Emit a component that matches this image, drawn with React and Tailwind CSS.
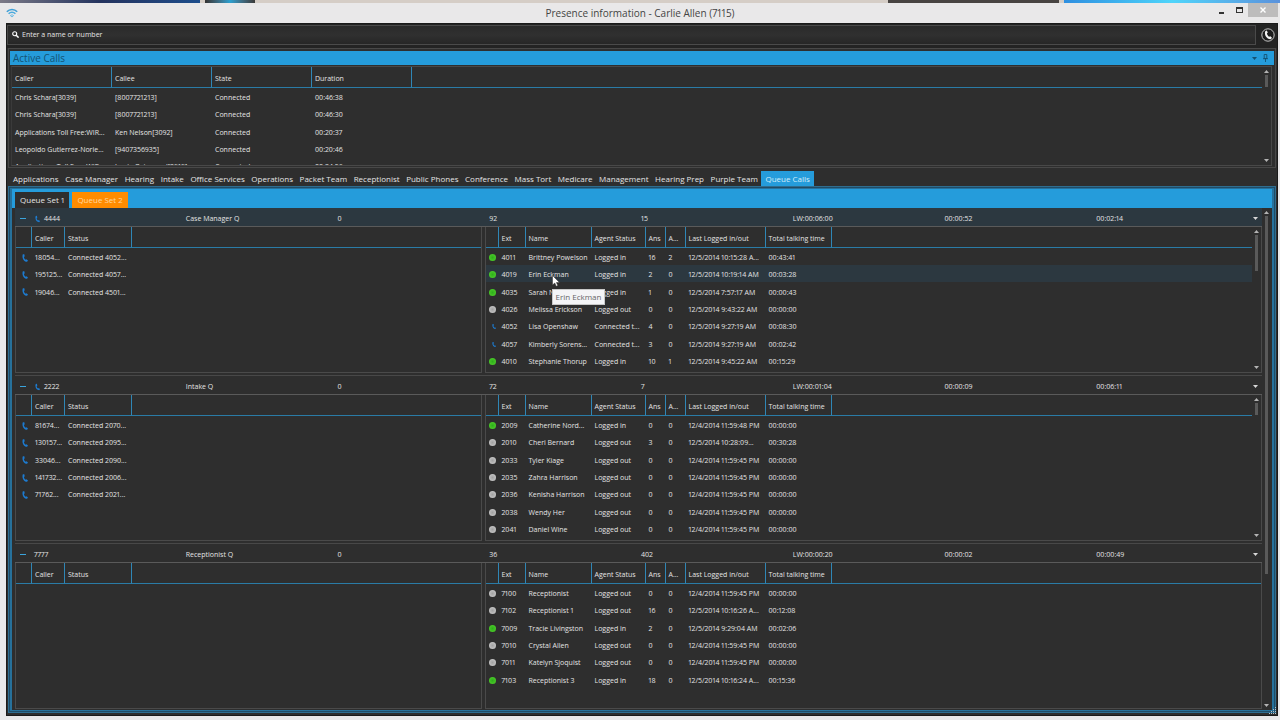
import React from "react";

const pages = [
  "Applications", "Case Manager", "Hearing", "Intake", "Office Services", "Operations", "Packet Team", "Receptionist",
  "Public Phones", "Conference", "Mass Tort", "Medicare", "Management", "Hearing Prep", "Purple Team", "Queue Calls",
];

const activeColumns = [
  { label: "Caller", width: "w-[100px]" },
  { label: "Callee", width: "w-[100px]" },
  { label: "State", width: "w-[100px]" },
  { label: "Duration", width: "w-[100px]" },
];

const activeCalls = [
  ["Chris Schara[3039]", "[8007721213]", "Connected", "00:46:38"],
  ["Chris Schara[3039]", "[8007721213]", "Connected", "00:46:30"],
  ["Applications Toll Free:WIR...", "Ken Nelson[3092]", "Connected", "00:20:37"],
  ["Leopoldo Gutierrez-Norie...", "[9407356935]", "Connected", "00:20:46"],
  ["Applications Toll Free:WIR...", "Jamie Ostergard[3919]", "Connected", "00:34:56"],
];

const callerColumns = [
  { label: "", width: "w-[16px]" },
  { label: "Caller", width: "w-[33px]" },
  { label: "Status", width: "w-[67px]" },
];

const agentColumns = [
  { label: "", width: "w-[13px]" },
  { label: "Ext", width: "w-[27px]" },
  { label: "Name", width: "w-[66px]" },
  { label: "Agent Status", width: "w-[54px]" },
  { label: "Ans", width: "w-[20px]" },
  { label: "A...", width: "w-[20px]" },
  { label: "Last Logged in/out", width: "w-[80px]" },
  { label: "Total talking time", width: "w-[66px]" },
];

const queues = [
  {
    id: "4444",
    ringing: true,
    selected: true,
    cells: ["Case Manager Q", "0", "92", "15", "LW:00:06:00", "00:00:52", "00:02:14"],
    thumb: "h-[36px]",
    callers: [
      ["call", "18054...", "Connected 4052..."],
      ["call", "195125...", "Connected 4057..."],
      ["call", "19046...", "Connected 4501..."],
    ],
    agents: [
      ["in", "4011", "Brittney Powelson", "Logged in", "16", "2", "12/5/2014 10:15:28 A...", "00:43:41"],
      ["in", "4019", "Erin Eckman", "Logged in", "2", "0", "12/5/2014 10:19:14 AM", "00:03:28"],
      ["in", "4035", "Sarah Nelson", "Logged in", "1", "0", "12/5/2014 7:57:17 AM", "00:00:43"],
      ["out", "4026", "Melissa Erickson", "Logged out", "0", "0", "12/5/2014 9:43:22 AM", "00:00:00"],
      ["busy", "4052", "Lisa Openshaw", "Connected t...", "4", "0", "12/5/2014 9:27:19 AM", "00:08:30"],
      ["busy", "4057", "Kimberly Sorens...", "Connected t...", "3", "0", "12/5/2014 9:27:19 AM", "00:02:42"],
      ["in", "4010", "Stephanie Thorup", "Logged in", "10", "1", "12/5/2014 9:45:22 AM", "00:15:29"],
    ],
    hovered: 1,
  },
  {
    id: "2222",
    ringing: true,
    cells: ["Intake Q", "0", "72", "7", "LW:00:01:04", "00:00:09", "00:06:11"],
    thumb: "h-[12px]",
    callers: [
      ["call", "81674...", "Connected 2070..."],
      ["call", "130157...", "Connected 2095..."],
      ["call", "33046...", "Connected 2090..."],
      ["call", "141732...", "Connected 2006..."],
      ["call", "71762...", "Connected 2021..."],
    ],
    agents: [
      ["in", "2009", "Catherine Nord...", "Logged in", "0", "0", "12/4/2014 11:59:48 PM", "00:00:00"],
      ["out", "2010", "Cheri Bernard", "Logged out", "3", "0", "12/5/2014 10:28:09...", "00:30:28"],
      ["out", "2033", "Tyler Kiage", "Logged out", "0", "0", "12/4/2014 11:59:45 PM", "00:00:00"],
      ["out", "2035", "Zahra Harrison", "Logged out", "0", "0", "12/4/2014 11:59:45 PM", "00:00:00"],
      ["out", "2036", "Kenisha Harrison", "Logged out", "0", "0", "12/4/2014 11:59:45 PM", "00:00:00"],
      ["out", "2038", "Wendy Her", "Logged out", "0", "0", "12/4/2014 11:59:45 PM", "00:00:00"],
      ["out", "2041", "Daniel Wine", "Logged out", "0", "0", "12/4/2014 11:59:45 PM", "00:00:00"],
    ],
  },
  {
    id: "7777",
    cells: ["Receptionist Q", "0", "36", "402", "LW:00:00:20", "00:00:02", "00:00:49"],
    callers: [],
    agents: [
      ["out", "7100", "Receptionist", "Logged out", "0", "0", "12/4/2014 11:59:45 PM", "00:00:00"],
      ["out", "7102", "Receptionist 1", "Logged out", "16", "0", "12/5/2014 10:16:26 A...", "00:12:08"],
      ["in", "7009", "Tracie Livingston", "Logged in", "2", "0", "12/5/2014 9:29:04 AM", "00:02:06"],
      ["out", "7010", "Crystal Allen", "Logged out", "0", "0", "12/4/2014 11:59:45 PM", "00:00:00"],
      ["out", "7011", "Katelyn Sjoquist", "Logged out", "0", "0", "12/4/2014 11:59:45 PM", "00:00:00"],
      ["in", "7103", "Receptionist 3", "Logged in", "18", "0", "12/5/2014 10:16:24 A...", "00:15:36"],
    ],
  },
];

function Handset({ className }) {
  return (
    <svg viewBox="0 0 7 9" className={className} aria-hidden="true">
      <path d="M1 .2 2.7 0 3.2 2.6 2.3 3.3C2.5 4.8 3.2 5.9 4.4 6.6L5.5 6 7 7.7 5.8 8.9C2.4 8.9-.6 4.6 1 .2Z" fill="#1d7bd0" />
    </svg>
  );
}

function StateIcon({ state }) {
  if (state === "call") return <Handset className="ml-[3px] h-2 w-[6px]" />;
  if (state === "busy") return <Handset className="ml-[3px] h-[5px] w-1" />;
  if (state === "in")
    return <span className="block h-[7px] w-[7px] rounded-full bg-radial from-[#2fae1c] to-[#52d42c]" />;
  return <span className="block h-[7px] w-[7px] rounded-full bg-radial from-[#a2a2a2] to-[#cfcfcf]" />;
}

function Arrow({ up, className = "fill-[#b4b4b4]" }) {
  return (
    <svg viewBox="0 0 5 3" className={"h-[3px] w-[5px] " + className} aria-hidden="true">
      <path d={up ? "M0 3 2.5 0 5 3Z" : "M0 0 2.5 3 5 0Z"} />
    </svg>
  );
}

function Scroller({ thumb }) {
  return (
    <div className="flex w-[9px] shrink-0 flex-col items-center py-[3px]">
      <Arrow up />
      <div className={"mt-[2px] w-[3px] bg-[#5a5a5a] " + thumb} />
      <div className="flex-1" />
      <Arrow />
    </div>
  );
}

function HoverTip({ text }) {
  return (
    <>
      <svg viewBox="0 0 8 12" className="absolute top-[10px] left-[26px] z-20 h-3 w-2" aria-hidden="true">
        <path d="M.5.5V10L2.8 8 4.2 11.3 5.8 10.6 4.4 7.5H7.5Z" fill="#fff" stroke="#333" strokeWidth=".5" />
      </svg>
      <span
        role="tooltip"
        className="absolute top-6 left-[26px] z-10 border border-[#c8c8c8] bg-[#f4f4f6] px-[3px] text-[8px] leading-[14px] text-[#666]"
      >
        {text}
      </span>
    </>
  );
}

function DataTable({ label, columns, rows, hovered }) {
  return (
    <table aria-label={label} className="w-full table-fixed border-separate border-spacing-0 self-start text-left text-[7px] leading-[15px] whitespace-nowrap">
      <thead>
        <tr className="h-[21px]">
          {columns.map((col, i) => (
            <th key={i} className={"border-r border-b border-r-[#2f86b6] border-b-[#2a7ba6] p-0 pt-[2px] pl-[3px] font-normal " + col.width}>
              {col.label}
            </th>
          ))}
          <th className="border-b border-b-[#2a7ba6] p-0" />
        </tr>
      </thead>
      <tbody>
        {rows.map((row, r) => (
          <tr key={r} className={"h-[17px] nth-[3n]:h-[18px] " + (r === hovered ? "bg-[#2c3840]" : "")}>
            {row.map((cell, c) => (
              <td key={c} className="relative p-0 pt-[2px] pl-[3px]">
                {columns[c].label === "" ? <StateIcon state={cell} /> : cell}
                {r === hovered && columns[c].label === "Name" && <HoverTip text={cell} />}
              </td>
            ))}
            <td className="p-0" />
          </tr>
        ))}
      </tbody>
    </table>
  );
}

function Queue({ queue }) {
  return (
    <section className="flex h-[168px] shrink-0 flex-col">
      <div className={"flex h-[18px] items-center pt-[3px] " + (queue.selected ? "bg-[#2c3840]" : "")}>
        <button aria-label="Collapse" className="flex h-full w-[19px] items-center pl-[5px]">
          <span className="h-px w-[6px] bg-[#3ba4dc]" />
        </button>
        <div className="grid flex-1 grid-cols-8 leading-[15px]">
          <span className="flex items-center gap-1">
            {queue.ringing && <Handset className="ml-px h-2 w-[5px]" />}
            {queue.id}
          </span>
          {queue.cells.map((cell, i) => (
            <span key={i}>{cell}</span>
          ))}
        </div>
        <button aria-label="Queue menu" className="flex h-full w-[14px] items-center justify-center">
          <Arrow className="fill-[#d8d8d8]" />
        </button>
      </div>
      <div className="grid flex-1 grid-cols-[3fr_5fr] gap-[3px] border-t border-[#5a5a5a]">
        <div className="border-x border-b border-[#4a4a4a]">
          <DataTable label={queue.cells[0] + " callers"} columns={callerColumns} rows={queue.callers} />
        </div>
        <div className="flex border-x border-b border-[#4a4a4a]">
          <DataTable label={queue.cells[0] + " agents"} columns={agentColumns} rows={queue.agents} hovered={queue.hovered} />
          {queue.thumb && <Scroller thumb={queue.thumb} />}
        </div>
      </div>
      <div className="h-[3px] border-b border-[#484848]" />
    </section>
  );
}

export default function App() {
  return (
    <div className="flex h-screen flex-col overflow-hidden bg-[#e9e8e9] font-['Open_Sans',sans-serif] text-[7px] text-[#e4e4e4] proportional-nums">
      {/* desktop behind the window */}
      <div className="flex h-[3px] shrink-0 bg-[#d5cdc6]">
        <div className="w-[200px] bg-linear-to-r from-[#7d7a86] via-[#24335e] to-[#1c4d8c]" />
        <div className="ml-[5px] w-[50px] bg-linear-to-r from-[#333] via-[#2aa0d0] to-[#3a3a3a]" />
        <div className="flex-1" />
        <div className="w-[171px] bg-[#484442]" />
        <div className="ml-[5px] w-[216px] bg-linear-to-r from-[#2f8fe0] via-[#4fd4fa] to-[#5a92dc]" />
      </div>

      <header className="grid h-5 shrink-0 grid-cols-[1fr_auto_1fr]">
        <svg viewBox="0 0 12 10" className="mt-[5px] ml-[6px] h-[10px] w-3" fill="none" strokeWidth="1.5" aria-hidden="true">
          <path d="M.8 3.8C3.6.6 8.4.6 11.2 3.8" stroke="#3f9fd6" />
          <path d="M2.6 5.8C4.5 3.8 7.5 3.8 9.4 5.8" stroke="#4aabdf" />
          <path d="M4.4 7.6C5.4 6.7 6.6 6.7 7.6 7.6L6 9Z" stroke="#6ab8e2" strokeWidth="1" />
        </svg>
        <h1 className="text-[10px] leading-5 text-[#444]">Presence information - Carlie Allen (7115)</h1>
        <div className="mr-[2px] flex items-start justify-end">
          <button aria-label="Minimize" className="flex h-[14px] w-[18px] items-center justify-center pt-[5px]">
            <span className="h-[2px] w-[5px] bg-[#333]" />
          </button>
          <button aria-label="Maximize" className="flex h-[14px] w-[18px] items-center justify-center">
            <span className="h-[6px] w-[7px] border border-t-2 border-[#333]" />
          </button>
          <button aria-label="Close" className="flex h-[14px] w-[30px] items-center justify-center bg-[#bdbcbc]">
            <svg viewBox="0 0 6 6" className="h-[6px] w-[6px]" stroke="#fff" strokeWidth="1.4">
              <path d="M.5.5 5.5 5.5M5.5.5.5 5.5" />
            </svg>
          </button>
        </div>
      </header>

      <main className="relative mr-[2px] mb-1 ml-[6px] flex min-h-0 flex-1 flex-col border border-[#1a1a1a] bg-[#2e2e2e]">
        <div className="flex h-6 shrink-0 items-start bg-[#232323]">
          <label className="mt-px flex h-5 flex-1 items-center gap-[3px] border border-[#4a4a4a] bg-linear-to-b from-[#2a2a2a] via-[#303030] to-[#262626] pb-[2px] pl-1">
            <svg viewBox="0 0 7 7" className="h-[7px] w-[7px]" fill="none" stroke="#fff" aria-hidden="true">
              <circle cx="2.7" cy="2.7" r="2" strokeWidth="1.1" />
              <path d="M4.2 4.2 6.6 6.6" strokeWidth="1.5" />
            </svg>
            <input
              aria-label="Enter a name or number"
              placeholder="Enter a name or number"
              className="h-full flex-1 bg-transparent outline-none placeholder:text-[#e4e4e4]"
            />
          </label>
          <button aria-label="Dial" className="mt-[4px] mr-[2px] ml-[5px]">
            <svg viewBox="0 0 14 14" className="h-[14px] w-[14px]">
              <circle cx="7" cy="7" r="6.2" fill="#1c1c1c" stroke="#c4c4c4" strokeWidth="1" />
              <path d="M4.4 3 5.8 2.4 6.8 4.6 5.9 5.5C6.2 6.9 7 8 8.2 8.8L9.3 8.2 11 9.8 9.8 11.2C6.2 11.6 2.6 6.8 4.4 3Z" fill="#f2f2f2" />
            </svg>
          </button>
        </div>

        <section className="mx-px h-[120px] shrink-0 border border-[#484848] px-px pt-[2px] pb-px">
          <div className="flex h-[14px] items-center bg-[#259cdb] pr-[6px] pl-[3px]">
            <h2 className="flex-1 text-[10px] leading-[14px] text-[#145273]">Active Calls</h2>
            <button aria-label="Panel menu" className="mr-[6px]">
              <Arrow className="fill-[#145273]" />
            </button>
            <button aria-label="Pin panel">
              <svg viewBox="0 0 5 8" className="h-[8px] w-[5px]" fill="none" stroke="#145273" strokeWidth=".9">
                <path d="M1.2.5H3.8V4.5H1.2ZM0 4.7H5M2.5 4.7V8" />
              </svg>
            </button>
          </div>
          <div className="mt-px mr-[2px] ml-px flex h-[100px] overflow-hidden border border-[#484848] border-l-[#3a3a3a]">
            <DataTable label="Active Calls" columns={activeColumns} rows={activeCalls} />
            <Scroller thumb="h-3" />
          </div>
        </section>

        <nav className="mt-[3px] h-[15px] shrink-0 pl-[3px] text-[8px] leading-[15px]">
          <div role="tablist" className="flex w-[804px] justify-between">
            {pages.map((page) => (
              <button
                key={page}
                role="tab"
                aria-selected={page === "Queue Calls"}
                className={page === "Queue Calls" ? "bg-[#259cdb] px-1 text-[#d3ecfa]" : "px-[3px]"}
              >
                {page}
              </button>
            ))}
          </div>
        </nav>

        <div className="mx-px mb-[2px] flex min-h-0 flex-1 flex-col border border-[#2f6d90] bg-[#204c66] p-px">
          <div className="flex min-h-0 flex-1 flex-col border-x-2 border-y border-[#27719b] bg-[#2e2e2e]">
            <div role="tablist" className="flex h-[19px] shrink-0 items-end gap-[3px] bg-[#259cdb] pl-[3px] text-[8px] leading-4">
              <button role="tab" aria-selected="false" className="bg-[#2e2e2e] px-[5px]">Queue Set 1</button>
              <button role="tab" aria-selected="true" className="bg-[#ff8c00] px-[5px] text-[#ffd9a0]">Queue Set 2</button>
            </div>
            <div className="flex min-h-0 flex-1 pr-px pl-[3px]">
              <div className="flex min-h-0 flex-1 flex-col overflow-hidden">
                {queues.map((queue) => (
                  <Queue key={queue.id} queue={queue} />
                ))}
              </div>
              <Scroller thumb="h-[358px]" />
            </div>
          </div>
        </div>

        <svg viewBox="0 0 8 8" className="absolute right-0 bottom-0 h-2 w-2 fill-[#b8c4cc]" aria-hidden="true">
          <path d="M6 0h1v1h-1zM4 2h1v1h-1zM6 2h1v1h-1zM2 4h1v1h-1zM4 4h1v1h-1zM6 4h1v1h-1zM0 6h1v1h-1zM2 6h1v1h-1zM4 6h1v1h-1zM6 6h1v1h-1z" />
        </svg>
      </main>
    </div>
  );
}
